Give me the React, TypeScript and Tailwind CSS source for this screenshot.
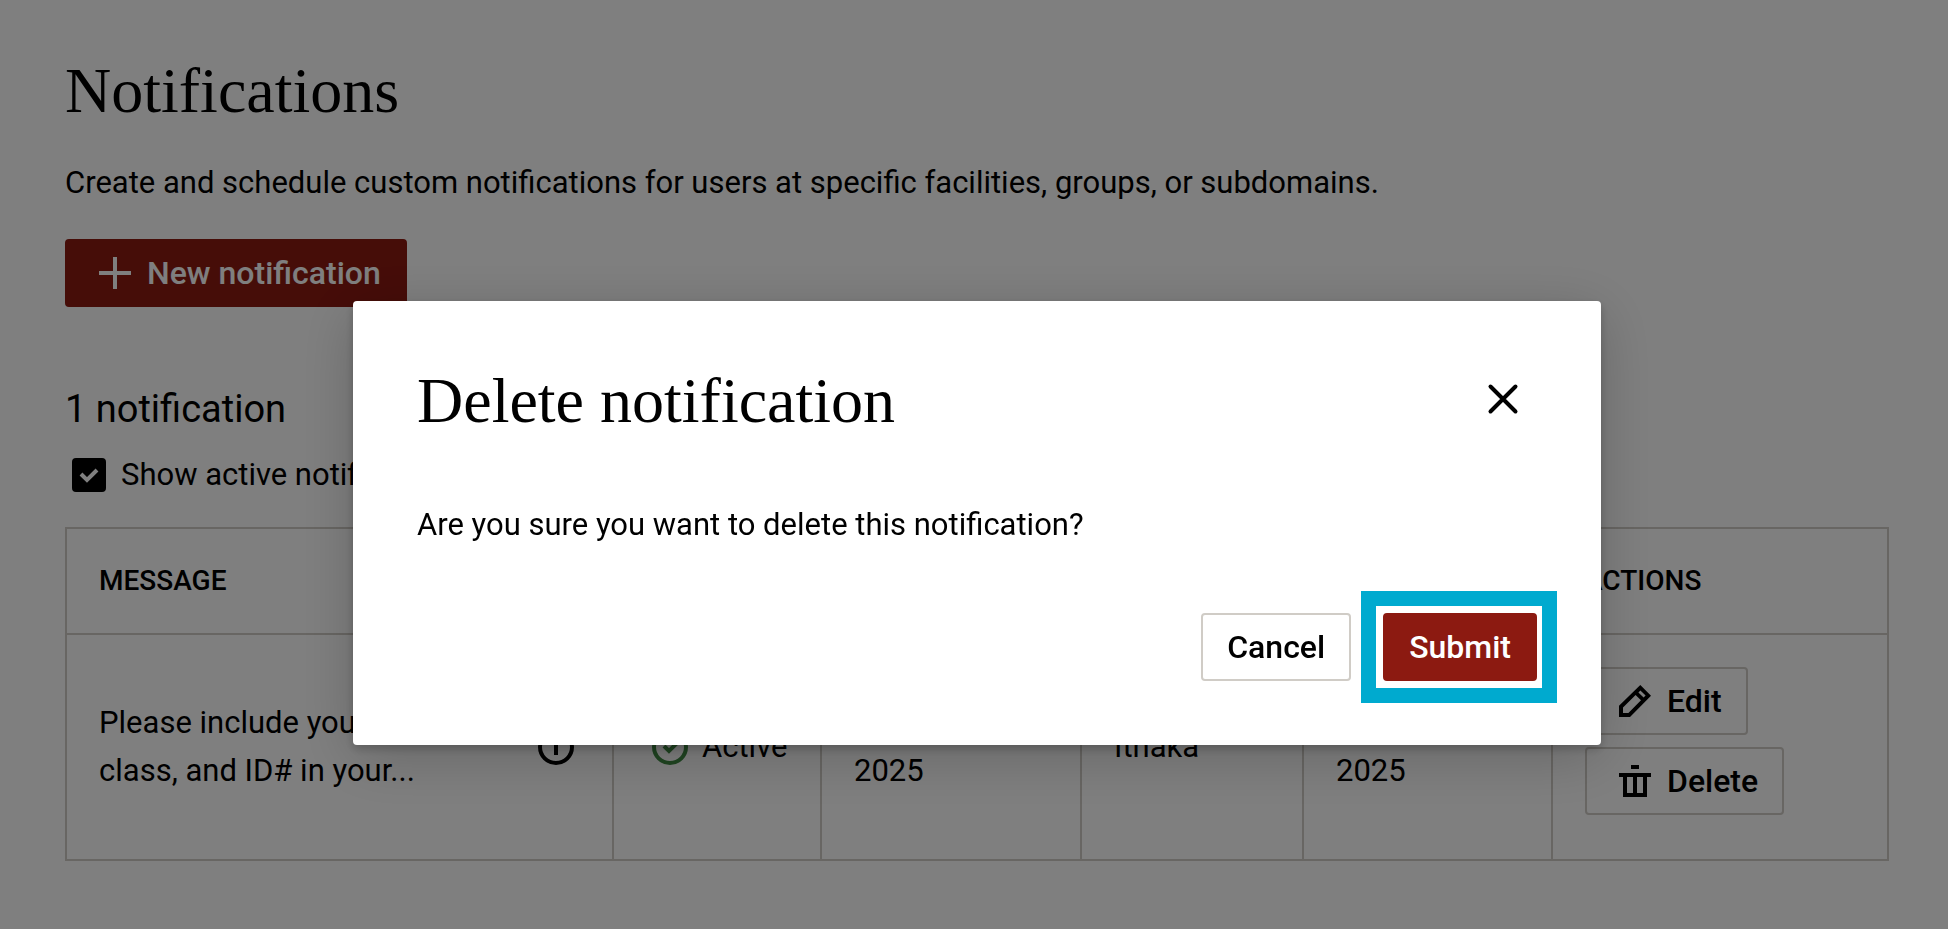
import { useState } from "react";
import type { ReactNode } from "react";

type Notification = {
  id: number;
  message: string;
  status: string;
  start: string;
  site: string;
  end: string;
};

const NOTIFICATIONS: Notification[] = [
  {
    id: 1,
    message: "Please include your name,\nclass, and ID# in your...",
    status: "Active",
    start: "May 1,\n2025",
    site: "Ithaka",
    end: "May 31,\n2025",
  },
];

const COLUMNS = [
  { label: "Message", width: "w-[547px]" },
  { label: "Status", width: "w-[208px]" },
  { label: "Start", width: "w-[260px]" },
  { label: "Site", width: "w-[222px]" },
  { label: "End", width: "w-[249px]" },
  { label: "Actions", width: "w-[336px]" },
];

function PlusIcon() {
  return (
    <svg className="size-8" viewBox="0 0 32 32" fill="currentColor" aria-hidden>
      <path d="M14 0h4v14h14v4H18v14h-4V18H0v-4h14z" />
    </svg>
  );
}

function PencilIcon() {
  return (
    <svg className="size-8" viewBox="0 0 32 32" fill="currentColor" fillRule="evenodd" aria-hidden>
      <path d="M21.3 0 32 10.7 11 32H0V20.7zM4 22.4V28h5.4L22 15.2 16.6 10zM19.4 7.4l5.2 5.2 2-2L21.4 5.4z" />
    </svg>
  );
}

function TrashIcon() {
  return (
    <svg className="size-8" viewBox="0 0 32 32" fill="currentColor" fillRule="evenodd" aria-hidden>
      <path d="M12 0h8v4h-8zM0 8h32v4h-4v20H4V12H0zM8 12v16h6V12zM18 12v16h6V12z" />
    </svg>
  );
}

function CloseIcon() {
  return (
    <svg className="size-8" viewBox="0 0 32 32" fill="none" stroke="currentColor" strokeWidth="4" strokeLinecap="round" aria-hidden>
      <path d="M3.5 3.5l25 25M28.5 3.5l-25 25" />
    </svg>
  );
}

function InfoIcon() {
  return (
    <svg className="size-12 shrink-0" viewBox="0 0 48 48" fill="none" stroke="currentColor" strokeWidth="4" aria-hidden>
      <circle cx="24" cy="24" r="16" />
      <path d="M24 21v11M24 15v4" />
    </svg>
  );
}

function ActiveIcon() {
  return (
    <svg className="size-12 shrink-0 text-[#3f8a43]" viewBox="0 0 48 48" fill="none" stroke="currentColor" strokeWidth="4" aria-hidden>
      <circle cx="24" cy="24" r="16" />
      <path d="M18 23l5 5 9-9" />
    </svg>
  );
}

function Button({
  primary,
  icon,
  onClick,
  children,
}: {
  primary?: boolean;
  icon?: ReactNode;
  onClick?: () => void;
  children: ReactNode;
}) {
  return (
    <button
      type="button"
      onClick={onClick}
      className={[
        "inline-flex h-[68px] items-center gap-4 rounded-sm border-2 pr-6 text-[32px] leading-[48px] font-medium",
        icon ? "pl-8" : "pl-6",
        primary ? "border-[#8c1a11] bg-[#8c1a11] text-white" : "border-[#d0ccc6] bg-white text-black",
      ].join(" ")}
    >
      {icon}
      {children}
    </button>
  );
}

function DeleteDialog({ onClose }: { onClose: () => void }) {
  return (
    <div className="fixed inset-0 flex items-start justify-center bg-black/50 pt-[301px] pl-1.5">
      <div
        role="dialog"
        aria-modal="true"
        aria-labelledby="delete-title"
        className="w-full max-w-[1248px] rounded bg-white p-16 shadow-[0_4px_10px_rgba(0,0,0,0.2),0_12px_56px_rgba(0,0,0,0.2)]"
      >
        <div className="flex items-start justify-between">
          <h2 id="delete-title" className="font-['Liberation_Serif',serif] text-[64px] leading-[72px]">
            Delete notification
          </h2>
          <button
            type="button"
            aria-label="Close"
            onClick={onClose}
            className="flex size-[68px] items-center justify-center"
          >
            <CloseIcon />
          </button>
        </div>

        <p className="mt-16 leading-[48px]">Are you sure you want to delete this notification?</p>

        <div className="mt-16 flex justify-end gap-8">
          <Button onClick={onClose}>Cancel</Button>
          <div className="relative flex">
            <Button primary onClick={onClose}>
              Submit
            </Button>
            <span className="pointer-events-none absolute -inset-y-[22px] -right-5 -left-[22px] border-[15px] border-[#00aacf]" />
          </div>
        </div>
      </div>
    </div>
  );
}

export default function App() {
  const [open, setOpen] = useState(true);
  const [showActive, setShowActive] = useState(true);

  return (
    <div className="min-h-screen bg-white font-['Roboto','Liberation_Sans',sans-serif] text-[31px] leading-[48px] text-black">
      <main className="pt-[55px] pr-[61px] pb-16 pl-[65px]">
        <h1 className="font-['Liberation_Serif',serif] text-[64px] leading-[72px]">Notifications</h1>
        <p className="mt-8 mb-8">
          Create and schedule custom notifications for users at specific facilities, groups, or subdomains.
        </p>
        <Button primary icon={<PlusIcon />}>
          New notification
        </Button>

        <h2 className="mt-[78px] text-[38px] leading-[48px]">1 notification</h2>
        <label className="mt-[18px] flex w-fit items-center gap-2">
          <span className="relative flex size-12 items-center justify-center">
            <input
              type="checkbox"
              checked={showActive}
              onChange={(e) => setShowActive(e.target.checked)}
              className="size-[34px] appearance-none rounded border-2 border-black checked:bg-black"
            />
            {showActive && (
              <svg
                className="pointer-events-none absolute inset-0 size-12 text-white"
                viewBox="0 0 48 48"
                fill="none"
                stroke="currentColor"
                strokeWidth="4"
                aria-hidden
              >
                <path d="M16 23l6 6 10-10" />
              </svg>
            )}
          </span>
          Show active notifications only
        </label>

        <table className="mt-7 w-full table-fixed border-collapse border-2 border-[#d0ccc6]">
          <thead>
            <tr className="border-b-2 border-[#d0ccc6]">
              {COLUMNS.map((c) => (
                <th
                  key={c.label}
                  scope="col"
                  className={`${c.width} px-8 py-8 text-left text-[28px] leading-10 font-medium uppercase`}
                >
                  {c.label}
                </th>
              ))}
            </tr>
          </thead>
          <tbody className="[&_td]:border-2 [&_td]:border-[#d0ccc6] [&_td]:px-8 [&_td]:whitespace-pre-line">
            {NOTIFICATIONS.map((n) => (
              <tr key={n.id}>
                <td>
                  <div className="flex items-center justify-between">
                    <span>{n.message}</span>
                    <InfoIcon />
                  </div>
                </td>
                <td>
                  <div className="flex items-center gap-2">
                    <ActiveIcon />
                    {n.status}
                  </div>
                </td>
                <td>{n.start}</td>
                <td>{n.site}</td>
                <td>{n.end}</td>
                <td>
                  <div className="flex flex-col items-start gap-3 pt-8 pb-11">
                    <Button icon={<PencilIcon />}>Edit</Button>
                    <Button icon={<TrashIcon />} onClick={() => setOpen(true)}>
                      Delete
                    </Button>
                  </div>
                </td>
              </tr>
            ))}
          </tbody>
        </table>
      </main>

      {open && <DeleteDialog onClose={() => setOpen(false)} />}
    </div>
  );
}
